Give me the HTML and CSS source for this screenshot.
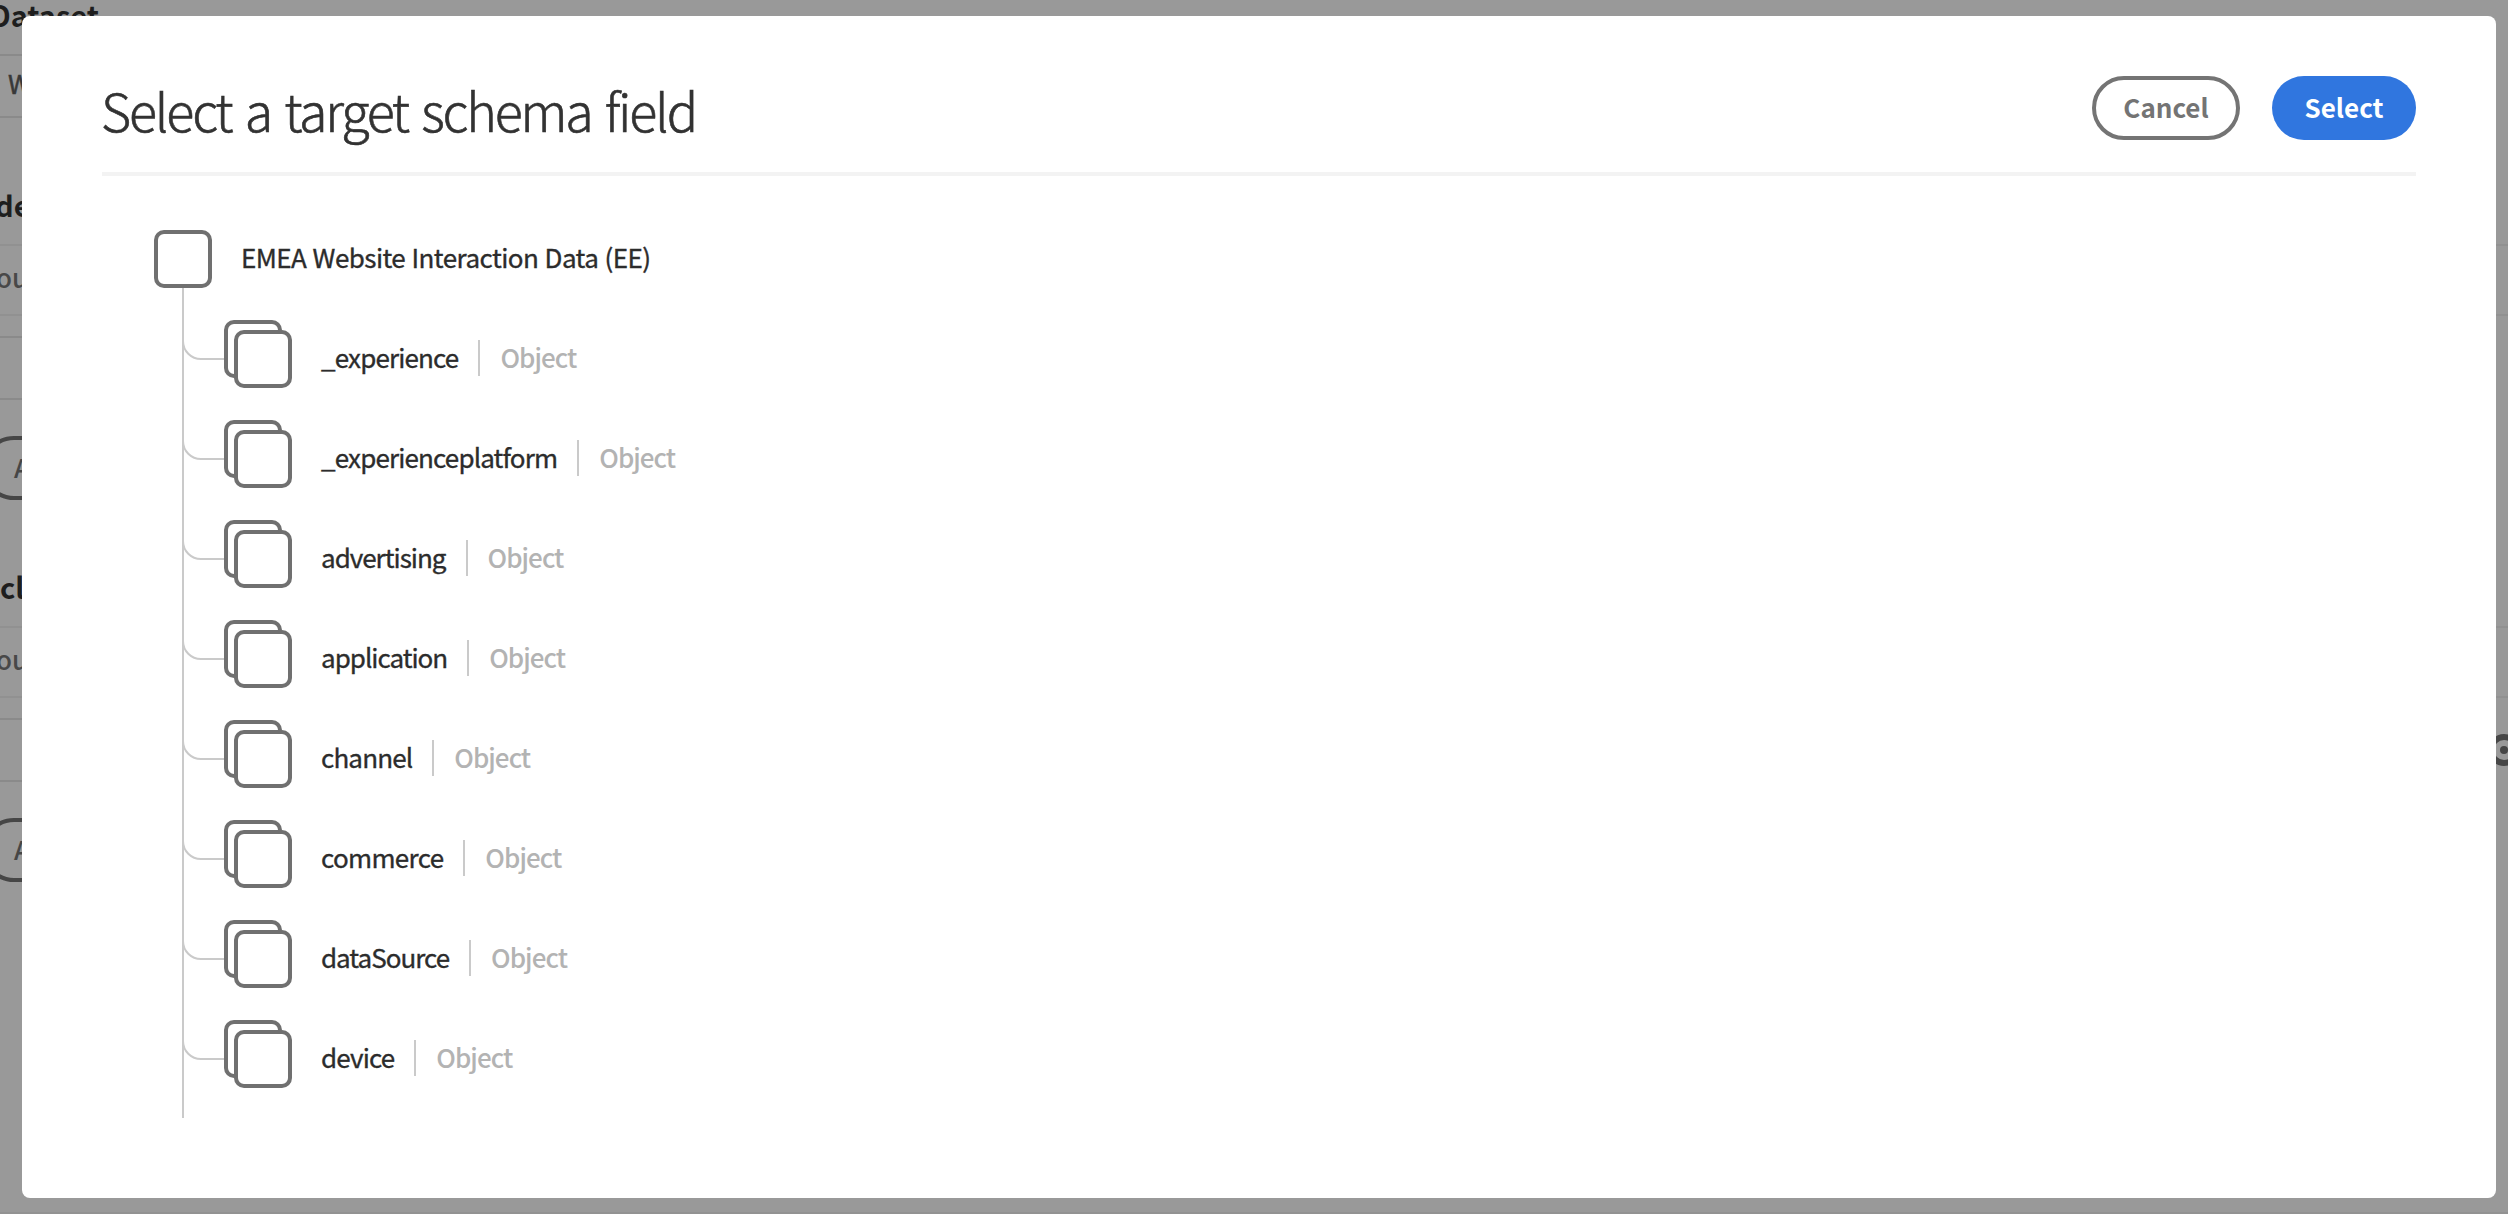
FILE: index.html
```
<!DOCTYPE html>
<html lang="en">
<head>
<meta charset="utf-8">
<title>Select a target schema field</title>
<link rel="stylesheet" href="styles.css">
</head>
<body>
<svg class="defs" aria-hidden="true">
  <symbol id="object-node" viewBox="0 0 110 100" overflow="visible">
    <path d="M-1 32V33a18 18 0 0 0 18 18H42" fill="none" stroke="#cacaca" stroke-width="2"/>
    <rect x="42" y="14" width="54" height="54" rx="8" fill="#fff" stroke="#707070" stroke-width="4"/>
    <rect x="52" y="24" width="54" height="54" rx="8" fill="#fff" stroke="#707070" stroke-width="4"/>
  </symbol>
</svg>

<div class="page">
  <h2 class="page-title first">Dataset</h2>
  <div class="field name">W</div>
  <h2 class="page-title second">de</h2>
  <div class="band">ou</div>
  <div class="field"></div>
  <div class="page-button">A</div>
  <h2 class="page-title third">cl</h2>
  <div class="band">ou</div>
  <div class="field"></div>
  <div class="page-button">A</div>
  <svg class="target" width="34" height="34" viewBox="0 0 34 34"><circle cx="17" cy="17" r="13" fill="none" stroke="#464646" stroke-width="6"/><circle cx="17" cy="17" r="4" fill="#464646"/></svg>
</div>

<main class="dialog">
  <header class="dialog-header">
    <h1>Select a target schema field</h1>
    <div class="actions">
      <button class="button cancel">Cancel</button>
      <button class="button select">Select</button>
    </div>
  </header>
  <div class="root">
    <svg width="58" height="100" viewBox="0 0 58 100"><path d="M29 78V100" stroke="#cacaca" stroke-width="2"/><rect x="2" y="24" width="54" height="54" rx="8" fill="#fff" stroke="#707070" stroke-width="4"/></svg>
    <span class="root-name">EMEA Website Interaction Data (EE)</span>
  </div>
  <ul class="tree">
    <li><svg class="node"><use href="#object-node"/></svg><span class="name-text">_experience</span><span class="type">Object</span></li>
    <li><svg class="node"><use href="#object-node"/></svg><span class="name-text">_experienceplatform</span><span class="type">Object</span></li>
    <li><svg class="node"><use href="#object-node"/></svg><span class="name-text tight">advertising</span><span class="type">Object</span></li>
    <li><svg class="node"><use href="#object-node"/></svg><span class="name-text tight">application</span><span class="type">Object</span></li>
    <li><svg class="node"><use href="#object-node"/></svg><span class="name-text">channel</span><span class="type">Object</span></li>
    <li><svg class="node"><use href="#object-node"/></svg><span class="name-text loose">commerce</span><span class="type">Object</span></li>
    <li><svg class="node"><use href="#object-node"/></svg><span class="name-text tight">dataSource</span><span class="type">Object</span></li>
    <li><svg class="node"><use href="#object-node"/></svg><span class="name-text">device</span><span class="type">Object</span></li>
  </ul>
</main>
</body>
</html>
```
FILE: styles.css
```
* { box-sizing: border-box; }

body {
  margin: 0;
  height: 1214px;
  overflow: hidden;
  background: #999;
  font-family: "Noto Sans CJK SC", "Noto Sans", sans-serif;
  font-size: 26px;
  color: #2c2c2c;
}

.defs { position: absolute; width: 0; height: 0; }

/* Dimmed page behind the dialog */
.page {
  position: relative;
  height: 1214px;
  overflow: hidden;
  border-bottom: 2px solid #929292;
}

.page-title {
  margin: 0;
  font-size: 29px;
  font-weight: 700;
  line-height: 28px;
  color: #1e1e1e;
}

.page-title.first { height: 54px; margin-left: -10px; }
.page-title.second { height: 126px; padding-top: 72px; margin-left: -5px; }
.page-title.third { height: 126px; padding-top: 72px; }

.field {
  width: 60px;
  height: 64px;
  border: solid #8a8a8a;
  border-width: 2px 0;
}

.field.name { padding-left: 8px; line-height: 54px; color: #383838; -webkit-text-stroke: 0.5px; }

.band {
  height: 72px;
  margin-bottom: 20px;
  border: solid #919191;
  border-width: 2px 0;
  line-height: 62px;
  font-weight: 500;
  text-indent: -4px;
  color: #484848;
}

.page-button {
  width: 140px;
  height: 64px;
  margin: 36px 0 0 -18px;
  padding-left: 28px;
  border: 4px solid #464646;
  border-radius: 32px;
  line-height: 53px;
  font-weight: 500;
  color: #464646;
}

.target { position: absolute; left: 2487px; top: 733px; }

/* Dialog */
.dialog {
  position: absolute;
  inset: 16px 12px 16px 22px;
  padding: 0 80px;
  border-radius: 8px;
  background: #fff;
}

.dialog-header {
  display: flex;
  justify-content: space-between;
  align-items: flex-start;
  height: 160px;
  padding-top: 60px;
  border-bottom: 4px solid #f3f3f3;
}

h1 {
  margin: 0 0 0 -1px;
  font-size: 52px;
  font-weight: 300;
  line-height: 68px;
  letter-spacing: -2.2px;
  word-spacing: 4px;
  -webkit-text-stroke: 0.6px #323232;
  color: #323232;
  white-space: nowrap;
}

.actions { display: flex; gap: 32px; }

.button {
  height: 64px;
  padding: 0 0 3px;
  border: 0;
  border-radius: 32px;
  font: 700 26px/30px "Noto Sans CJK SC", "Noto Sans", sans-serif;
}

.cancel { width: 148px; border: 4px solid #747474; background: #fff; color: #747474; }
.select { width: 144px; background: #3076df; color: #fff; }

.root {
  display: flex;
  align-items: center;
  gap: 29px;
  height: 100px;
  margin: 32px 0 0 52px;
}

.root-name {
  padding-bottom: 3px;
  letter-spacing: -0.55px;
  word-spacing: 1px;
  -webkit-text-stroke: 0.35px;
  white-space: nowrap;
}

.tree {
  height: 810px;
  margin: 0 0 0 80px;
  padding: 0;
  border-left: 2px solid #cacaca;
  list-style: none;
}

.tree li { display: flex; align-items: center; height: 100px; }

.node { width: 110px; height: 100px; margin-right: 27px; overflow: visible; }

.name-text { padding-bottom: 4px; letter-spacing: -0.85px; -webkit-text-stroke: 0.35px; }
.name-text.tight { letter-spacing: -1px; }
.name-text.loose { letter-spacing: -0.68px; }

.type {
  height: 36px;
  margin-left: 20px;
  padding-left: 20px;
  border-left: 2px solid #cacaca;
  font-weight: 500;
  line-height: 34px;
  letter-spacing: -0.95px;
  color: #b3b3b3;
}
```
